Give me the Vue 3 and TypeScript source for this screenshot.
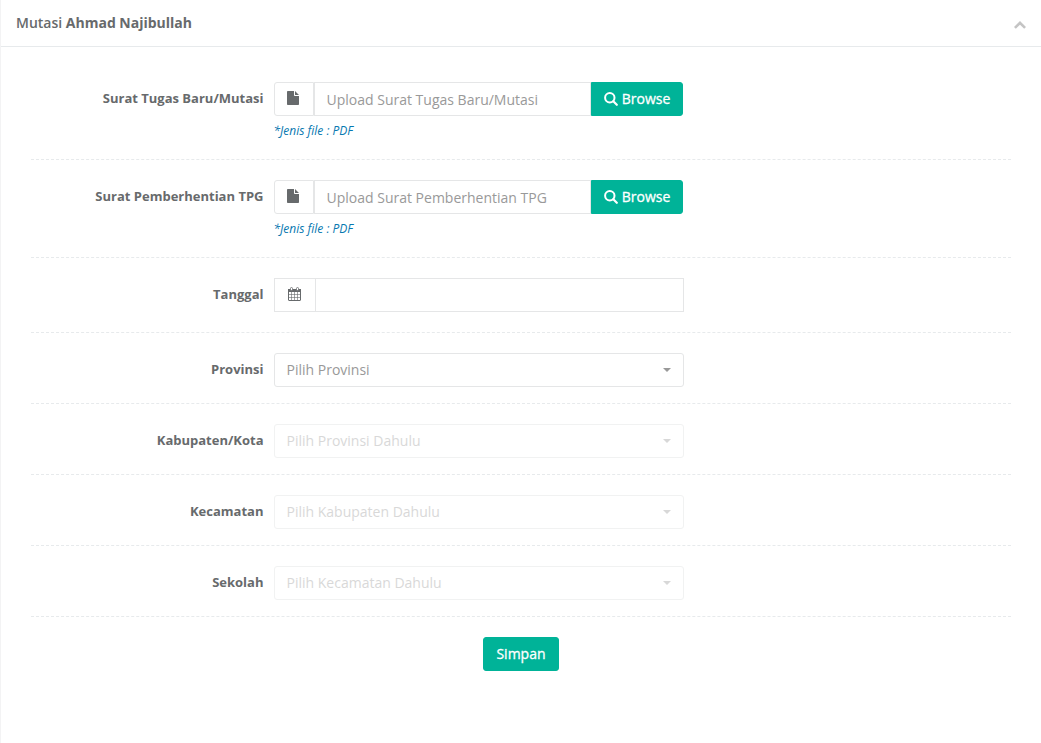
<script setup lang="ts">
import { ref } from 'vue'

interface UploadField {
  id: string
  label: string
  placeholder: string
}

interface SelectField {
  id: string
  label: string
  placeholder: string
  disabled: boolean
}

const uploads: UploadField[] = [
  { id: 'surat-tugas', label: 'Surat Tugas Baru/Mutasi', placeholder: 'Upload Surat Tugas Baru/Mutasi' },
  { id: 'surat-pemberhentian', label: 'Surat Pemberhentian TPG', placeholder: 'Upload Surat Pemberhentian TPG' },
]

const selects: SelectField[] = [
  { id: 'provinsi', label: 'Provinsi', placeholder: 'Pilih Provinsi', disabled: false },
  { id: 'kabupaten', label: 'Kabupaten/Kota', placeholder: 'Pilih Provinsi Dahulu', disabled: true },
  { id: 'kecamatan', label: 'Kecamatan', placeholder: 'Pilih Kabupaten Dahulu', disabled: true },
  { id: 'sekolah', label: 'Sekolah', placeholder: 'Pilih Kecamatan Dahulu', disabled: true },
]

const open = ref(true)
const tanggal = ref('')
</script>

<template>
  <main class="panel">
    <header class="panel-title">
      <h5>Mutasi <strong>Ahmad Najibullah</strong></h5>
      <button type="button" class="collapse" aria-label="Toggle" :aria-expanded="open" @click="open = !open">
        <svg width="12" height="8" viewBox="0 0 12 8"><path d="M6 0 12 6 10.2 7.8 6 3.7 1.8 7.8 0 6z" /></svg>
      </button>
    </header>

    <form v-if="open" class="panel-content" @submit.prevent>
      <div v-for="field in uploads" :key="field.id" class="row row-upload">
        <label :for="field.id">{{ field.label }}</label>
        <div class="control">
          <div class="group group-upload">
            <span class="addon addon-file">
              <svg width="12" height="14" viewBox="0 0 12 14"><path d="M.8 0H7v4.2c0 .5.3.8.8.8H12v8.2c0 .5-.3.8-.8.8H.8c-.5 0-.8-.3-.8-.8V.8C0 .3.3 0 .8 0zM8 .1c.2.1.4.2.5.4l3 3c.2.1.3.3.4.5H8z" /></svg>
            </span>
            <input :id="field.id" class="text" type="text" :placeholder="field.placeholder" readonly />
            <button type="button" class="btn btn-browse">
              <svg width="14" height="14" viewBox="0 0 14 14"><circle cx="5.8" cy="5.8" r="4.7" fill="none" stroke="currentColor" stroke-width="2" /><path d="M9.3 9.3 12.8 12.8" stroke="currentColor" stroke-width="2.2" stroke-linecap="round" /></svg>
              <span>Browse</span>
            </button>
          </div>
          <p class="help">*Jenis file : PDF</p>
        </div>
      </div>

      <div class="row row-date">
        <label for="tanggal">Tanggal</label>
        <div class="control">
          <div class="group">
            <span class="addon addon-date">
              <svg width="13" height="14" viewBox="0 0 13 14">
                <rect x="0.5" y="2.5" width="12" height="11" rx="0.5" fill="none" stroke="currentColor" />
                <path d="M0 2h13v3H0z" />
                <path d="M3.500 5v8.500M6.500 5v8.500M9.500 5v8.500M.5 7.500h12M.5 10.500h12" fill="none" stroke="currentColor" stroke-width="0.6" />
                <g fill="#fff" stroke="currentColor" stroke-width="0.8">
                  <rect x="2.500" y="0.500" width="2" height="3" rx="0.900" />
                  <rect x="8.500" y="0.500" width="2" height="3" rx="0.900" />
                </g>
              </svg>
            </span>
            <input id="tanggal" v-model="tanggal" class="text" type="text" />
          </div>
        </div>
      </div>

      <div v-for="field in selects" :key="field.id" class="row row-select">
        <label :for="field.id">{{ field.label }}</label>
        <div class="control">
          <div class="select" :class="{ disabled: field.disabled }">
            <select :id="field.id" :disabled="field.disabled">
              <option>{{ field.placeholder }}</option>
            </select>
            <svg class="caret" width="8" height="4" viewBox="0 0 8 4"><path d="M0 0h8L4 4z" /></svg>
          </div>
        </div>
      </div>

      <div class="actions">
        <button type="submit" class="btn btn-submit">Simpan</button>
      </div>
    </form>
  </main>
</template>

<style>
body {
  margin: 0;
  background: #fff;
}
</style>

<style scoped>
* {
  box-sizing: border-box;
}

.panel {
  min-height: 100vh;
  border-left: 1px solid #f3f3f4;
  background: #fff;
  color: #676a6c;
  font: 13px/20px "Open Sans", "Noto Sans", sans-serif;
}

svg {
  display: block;
  flex: none;
  fill: currentColor;
}

.panel-title {
  display: flex;
  justify-content: space-between;
  align-items: center;
  height: 47px;
  padding: 0 15px;
  border-bottom: 1px solid #e7eaec;
}

h5 {
  margin: 0;
  font-size: 14px;
  font-weight: 600;
}

h5 strong {
  font-weight: 700;
}

.collapse {
  padding: 4px 0 0;
  border: 0;
  background: none;
  color: #c4c4c4;
}

.panel-content {
  padding: 15px 30px 20px;
}

.row {
  display: grid;
  grid-template-columns: 3fr 5fr 4fr;
  margin: 0 -15px;
  padding-top: 20px;
}

.row::after {
  content: "";
  grid-column: 1 / -1;
  margin: 0 15px;
  border-top: 1px dashed #e7eaec;
}

.row-upload {
  row-gap: 18px;
}

.row-date {
  row-gap: 20px;
}

.row-select {
  row-gap: 16px;
}

.row > label {
  padding: 6px 5px 0;
  text-align: right;
  font-weight: 700;
}

.control {
  padding: 0 5px;
  min-width: 0;
}

.group {
  display: flex;
  height: 34px;
}

.group-upload {
  margin-right: 1px;
}

.addon {
  display: flex;
  flex: none;
  align-items: center;
  justify-content: center;
  border: 1px solid #e5e6e7;
}

.addon-file {
  width: 40px;
  padding: 0 2px 2px 0;
  border-radius: 3px 0 0 3px;
}

.addon-date {
  width: 41px;
  padding-bottom: 2px;
  border-right: 0;
}

.text {
  flex: 1;
  min-width: 0;
  padding: 2px 12px 0;
  border: 1px solid #e5e6e7;
  border-radius: 0;
  outline: 0;
  background: #fff;
  color: inherit;
  font: inherit;
  font-size: 14px;
}

.text::placeholder {
  color: #999;
  opacity: 1;
}

.btn {
  display: flex;
  align-items: center;
  justify-content: center;
  gap: 4px;
  height: 34px;
  padding: 0 12px;
  border: 1px solid #00b398;
  border-radius: 3px;
  background: #00b398;
  color: #fff;
  font: inherit;
  font-size: 14px;
  -webkit-text-stroke: 0.3px currentColor;
}

.btn-browse {
  flex: none;
  border-radius: 0 3px 3px 0;
}

.help {
  margin: 5px 0 0;
  color: #0878b0;
  font-size: 12px;
  font-style: italic;
}

.select {
  display: grid;
  align-items: center;
}

.select > * {
  grid-area: 1 / 1;
}

.select.disabled {
  opacity: 0.5;
}

select {
  width: 100%;
  height: 34px;
  padding: 0 12px;
  border: 1px solid #e5e6e7;
  border-radius: 3px;
  outline: 0;
  appearance: none;
  background: #fff;
  color: #999;
  opacity: 1;
  font: inherit;
  font-size: 14px;
}

.caret {
  justify-self: end;
  margin-right: 13px;
  color: #999;
  pointer-events: none;
}

.disabled select,
.disabled .caret {
  color: #b3b3b3;
}

.actions {
  display: flex;
  justify-content: center;
  padding-top: 20px;
}
</style>
